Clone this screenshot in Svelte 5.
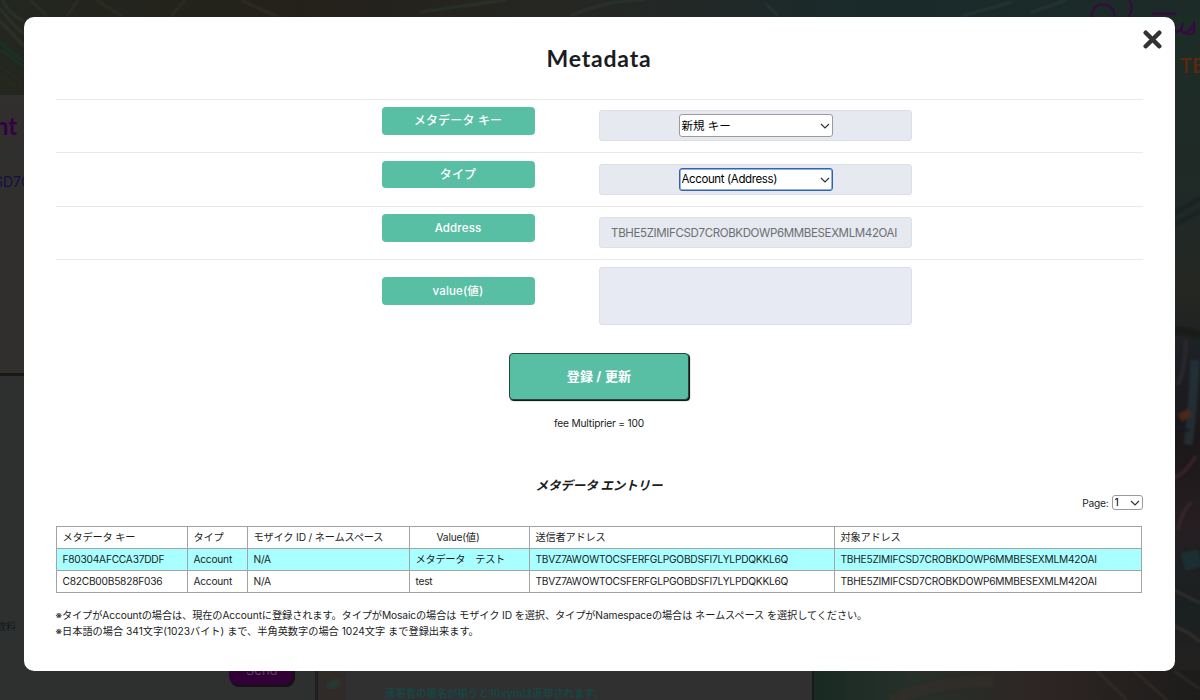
<script lang="ts">
  type Entry = {
    key: string;
    type: string;
    id: string;
    value: string;
    source: string;
    target: string;
  };

  const address = 'TBHE5ZIMIFCSD7CROBKDOWP6MMBESEXMLM42OAI';
  const sender = 'TBVZ7AWOWTOCSFERFGLPGOBDSFI7LYLPDQKKL6Q';

  const entries: Entry[] = [
    { key: 'F80304AFCCA37DDF', type: 'Account', id: 'N/A', value: 'メタデータ　テスト', source: sender, target: address },
    { key: 'C82CB00B5828F036', type: 'Account', id: 'N/A', value: 'test', source: sender, target: address },
  ];

  let open = true;
  let selected = 0;
  let metaKey = 'new';
  let metaType = 'account';
  let page = '1';
  let value = '';
</script>

<div class="screen">
  <svg class="backdrop" viewBox="0 0 1200 700" aria-hidden="true">
    <defs>
      <linearGradient id="top" x1="0" x2="1" y1="0" y2="0">
        <stop offset="0" stop-color="#23271f" />
        <stop offset="0.25" stop-color="#24211a" />
        <stop offset="0.5" stop-color="#262724" />
        <stop offset="0.72" stop-color="#1a2a2b" />
        <stop offset="1" stop-color="#1c2b27" />
      </linearGradient>
      <linearGradient id="right" x1="0" x2="0" y1="0" y2="1">
        <stop offset="0" stop-color="#1c2d26" />
        <stop offset="0.28" stop-color="#202927" />
        <stop offset="0.4" stop-color="#252722" />
        <stop offset="0.5" stop-color="#1c2024" />
        <stop offset="0.62" stop-color="#1c1719" />
        <stop offset="0.75" stop-color="#251f22" />
        <stop offset="0.86" stop-color="#1a2021" />
        <stop offset="1" stop-color="#26211e" />
      </linearGradient>
      <linearGradient id="bottom" x1="0" x2="1" y1="0" y2="0">
        <stop offset="0" stop-color="#182a23" />
        <stop offset="0.25" stop-color="#27302a" />
        <stop offset="0.6" stop-color="#2d2523" />
        <stop offset="1" stop-color="#1d1c1b" />
      </linearGradient>
      <filter id="paint" x="-5%" y="-5%" width="110%" height="110%">
        <feGaussianBlur stdDeviation="1.2" />
      </filter>
    </defs>
    <rect width="1200" height="700" fill="#303030" />
    <rect width="1200" height="95" fill="url(#top)" />
    <rect x="1100" y="17" width="100" height="683" fill="url(#right)" />
    <g fill="none" stroke-width="2" opacity="0.6" filter="url(#paint)">
      <path d="M0 8Q12 25 24 34M0 21l24 25M2 0q10 17 22 21" stroke="#3c4237" />
      <path d="M0 42l24 20M0 49l24 18" stroke="#174139" />
      <path d="M0 66l24 18M0 77l24 13" stroke="#302c22" />
      <path d="M30 0l17 16M67 16L78 0M96 0l26 16M171 16L185 0M241 0q14 7 36 16" stroke="#3c382b" />
      <path d="M420 12l86-12M570 16q36-16 74-16M766 4l12 12M962 16l50-14M1030 13l36-13" stroke="#33423d" />
      <path d="M1174 214l26-16M1174 225l26-14" stroke="#121d20" stroke-width="3" />
      <path d="M1174 330q14 0 26 6" stroke="#15160f" stroke-width="7" />
      <path d="M1178 385q8-20 8-45" stroke="#352f35" stroke-width="4" />
      <path d="M1195 360q-2 50-7 85" stroke="#283a42" stroke-width="9" />
      <path d="M1180 418l10-6" stroke="#6a321f" stroke-width="8" />
      <path d="M1175 425l14 6" stroke="#121a2b" stroke-width="4" />
      <path d="M1174 478q12-5 22-22M1178 530q4-20 14-28" stroke="#422a33" stroke-width="4" />
      <path d="M1183 562l17-4" stroke="#173a3d" stroke-width="18" />
      <path d="M1174 590l26 13M1174 626q14 5 26 16" stroke="#403a31" stroke-width="3" />
    </g>
    <rect y="97" width="317" height="603" fill="#302f2e" />
    <path d="M0 155.500h24M0 441.500h24" stroke="#20323a" />
    <path d="M0 374.500h24" stroke="#1b1712" stroke-width="3" />
    <rect x="0" y="376" width="317" height="324" fill="#2e3030" />
    <rect x="315" y="670" width="3" height="30" fill="#1c211f" />
    <rect x="318" y="670" width="28" height="30" fill="#302b29" />
    <path d="M327 688l13-8" fill="none" stroke="#224038" stroke-width="9" opacity="0.6" filter="url(#paint)" />
    <rect x="347" y="670" width="465" height="30" fill="#303030" />
    <rect x="812" y="670" width="2" height="30" fill="#171a18" />
    <rect x="814" y="670" width="386" height="30" fill="url(#bottom)" />
    <g fill="none" stroke-width="2" opacity="0.6" filter="url(#paint)">
      <path d="M890 700q62-22 103-18" stroke="#352d2a" stroke-width="12" />
      <path d="M1096 670l31 30M1133 670l34 30M1174 671l26 18" stroke="#403930" />
    </g>
    <rect x="230" y="655" width="65" height="32" rx="9" fill="#131113" />
    <rect x="229" y="653" width="64" height="32" rx="9" fill="#300036" />
    <text class="send" x="246" y="675" fill="#56435a">Send</text>
    <text class="heading" x="-5" y="135" fill="#350044">nt</text>
    <text class="code" x="-6" y="187" fill="#130f48">SD7C</text>
    <text class="small" x="-4" y="630" fill="#14191b">数料</text>
    <text class="notice" x="385" y="697" fill="#174545">連署者の署名が揃うと10xymは返却されます。</text>
    <text class="net" x="1180" y="73" fill="#58290f">TE</text>
    <g fill="none" stroke="#370944" stroke-width="2" stroke-linecap="round">
      <path d="M1092 17c-1-17 22-17 23 0M1129 0q6 8-1 17M1153 13.500h22" />
      <path d="M1175 25q-2 8 2 7q4-1 6-9q-3 10 1 10q6-1 10-10q2 9-2 11q-6 1-7-2M1189 30q4 0 6-2" />
    </g>
  </svg>

  {#if open}
    <section class="modal" aria-label="Metadata">
      <button class="close" aria-label="Close" on:click={() => (open = false)}>
        <svg viewBox="0 0 18 18"><path d="M2.600 2.600l12.800 12.800M15.400 2.600L2.600 15.400" /></svg>
      </button>
      <h1>Metadata</h1>

      <div class="form">
        <div class="row">
          <span class="label kana">メタデータ キー</span>
          <div class="field">
            <div class="select">
              <select bind:value={metaKey} aria-label="メタデータ キー">
                <option value="new">新規 キー</option>
              </select>
              <svg class="chevron" viewBox="0 0 10 6"><path d="M1 1l4 4 4-4" /></svg>
            </div>
          </div>
        </div>
        <div class="row">
          <span class="label kana">タイプ</span>
          <div class="field">
            <div class="select focused">
              <select bind:value={metaType} aria-label="タイプ">
                <option value="account">Account (Address)</option>
                <option value="mosaic">Mosaic</option>
                <option value="namespace">Namespace</option>
              </select>
              <svg class="chevron" viewBox="0 0 10 6"><path d="M1 1l4 4 4-4" /></svg>
            </div>
          </div>
        </div>
        <div class="row">
          <span class="label">Address</span>
          <div class="field address">{address}</div>
        </div>
        <div class="row tall">
          <span class="label">value(値)</span>
          <textarea class="field area" bind:value aria-label="value"></textarea>
        </div>
      </div>

      <button class="submit">登録 / 更新</button>
      <p class="fee">fee Multiprier = 100</p>

      <h2>メタデータ エントリー</h2>
      <div class="pager">
        <span>Page:</span>
        <div class="select page">
          <select bind:value={page} aria-label="Page">
            <option value="1">1</option>
          </select>
          <svg class="chevron" viewBox="0 0 10 6"><path d="M1 1l4 4 4-4" /></svg>
        </div>
      </div>

      <table>
        <colgroup>
          <col class="c-key" /><col class="c-type" /><col class="c-id" />
          <col class="c-value" /><col class="c-source" /><col />
        </colgroup>
        <thead>
          <tr>
            <th>メタデータ キー</th>
            <th>タイプ</th>
            <th>モザイク ID / ネームスペース</th>
            <th class="h-value">Value(値)</th>
            <th>送信者アドレス</th>
            <th>対象アドレス</th>
          </tr>
        </thead>
        <tbody>
          {#each entries as entry, i}
            <tr class:selected={selected === i} on:click={() => (selected = i)}>
              <td>{entry.key}</td>
              <td>{entry.type}</td>
              <td>{entry.id}</td>
              <td>{entry.value}</td>
              <td>{entry.source}</td>
              <td>{entry.target}</td>
            </tr>
          {/each}
        </tbody>
      </table>

      <div class="notes">
        <p class="note-type">※タイプがAccountの場合は、現在のAccountに登録されます。タイプがMosaicの場合は モザイク ID を選択、タイプがNamespaceの場合は ネームスペース を選択してください。</p>
        <p>※日本語の場合 341文字(1023バイト) まで、半角英数字の場合 1024文字 まで登録出来ます。</p>
      </div>
    </section>
  {/if}
</div>

<style>
  :global(body) {
    margin: 0;
    overflow: hidden;
  }

  .screen {
    position: relative;
    box-sizing: border-box;
    width: 1200px;
    height: 700px;
    padding: 16.5px 25.5px 29.5px 23.5px;
    overflow: hidden;
    font-family: Inter, "Noto Sans CJK JP", sans-serif;
    color: #1b1c1e;
  }

  .screen * {
    box-sizing: border-box;
  }

  .backdrop {
    position: absolute;
    inset: 0;
    width: 1200px;
    height: 700px;
  }

  .send { font-size: 13px; }
  .heading { font: 700 24px Lato, sans-serif; }
  .code { font-size: 14px; }
  .small { font-size: 10px; }
  .notice { font-size: 10.400px; font-weight: 700; }
  .net { font: 700 20px Lato, sans-serif; }

  .modal {
    position: relative;
    height: 654px;
    padding: 0 32px;
    background: #fff;
    border-radius: 10px;
  }

  .close {
    position: absolute;
    top: 13px;
    right: 13px;
    width: 19px;
    height: 19px;
    padding: 0;
    border: 0;
    background: none;
    cursor: pointer;
  }

  .close svg {
    display: block;
    width: 19px;
    height: 19px;
  }

  .close path {
    stroke: #333;
    stroke-width: 4.300;
    stroke-linecap: round;
  }

  h1 {
    height: 82px;
    margin: 0;
    padding-top: 25.5px;
    font: 700 23px/32px Lato, sans-serif;
    letter-spacing: 0.8px;
    text-align: center;
  }

  .row {
    display: grid;
    grid-template-columns: 153px 313px;
    column-gap: 64px;
    align-items: start;
    height: 53.5px;
    padding: 7.5px 0 0 326px;
    border-top: 1px solid #e9e9e9;
  }

  .row.tall {
    height: 83px;
    padding-top: 6.5px;
  }

  .label {
    height: 27.5px;
    border-radius: 4px;
    background: #58bfa5;
    color: #fff;
    font-size: 11.500px;
    font-weight: 500;
    line-height: 28px;
    letter-spacing: 0.15px;
    text-align: center;
  }

  .tall .label {
    margin-top: 10.5px;
    line-height: 29px;
  }

  .label.kana {
    font-size: 12px;
    line-height: 28px;
  }

  .field {
    display: flex;
    justify-content: center;
    align-items: center;
    width: 313px;
    height: 31px;
    margin-top: 3px;
    border: 1px solid #dcdfe5;
    border-radius: 3px;
    background: #e6eaf0;
  }

  .address {
    padding: 1px 2px 0 0;
    color: #6c6e71;
    font-size: 11.500px;
    line-height: 20px;
    letter-spacing: -0.36px;
  }

  .area {
    display: block;
    height: 58px;
    margin: 0;
    background: #e7eaf2;
    outline: 0;
    resize: none;
  }

  .select {
    position: relative;
    width: 154px;
    height: 23px;
    margin-left: 1px;
    border: 1px solid #9a9a9f;
    border-radius: 3px;
    background: #fff;
  }

  .select.focused {
    border-color: #2d62b4;
    box-shadow: inset 0 0 0 0.5px #2d62b4;
    letter-spacing: -0.38px;
  }

  .select select {
    display: block;
    width: 100%;
    height: 100%;
    padding: 0 0 0 2px;
    border: 0;
    outline: 0;
    appearance: none;
    background: none;
    color: #000;
    font: 11.500px Inter, "Noto Sans CJK JP", sans-serif;
    letter-spacing: inherit;
  }

  .chevron {
    position: absolute;
    top: 8px;
    right: 2px;
    width: 10px;
    height: 6px;
    pointer-events: none;
  }

  .chevron path {
    fill: none;
    stroke: #333;
    stroke-width: 1.200;
  }

  .submit {
    display: block;
    width: 180px;
    height: 47px;
    margin: 11px auto 0 453.500px;
    padding: 0 0 2px;
    border: 1px solid #26463e;
    border-radius: 4px;
    background: #58bfa5;
    box-shadow: 1px 1px 1px #000;
    color: #fff;
    font: 700 13px Inter, "Noto Sans CJK JP", sans-serif;
    letter-spacing: 0.2px;
  }

  .fee {
    margin: 14.5px 0 0;
    font-size: 10.200px;
    line-height: 16px;
    letter-spacing: -0.2px;
    text-align: center;
  }

  h2 {
    margin: 46.5px 0 0;
    font-size: 12.500px;
    font-style: italic;
    font-weight: 700;
    line-height: 18px;
    letter-spacing: -0.1px;
    text-align: center;
  }

  .pager {
    display: flex;
    justify-content: flex-end;
    align-items: center;
    gap: 3px;
    height: 15px;
    font-size: 10.200px;
    letter-spacing: -0.2px;
  }

  .select.page {
    width: 31px;
    height: 15px;
    margin-left: 0;
  }

  .page select {
    font-size: 10.500px;
  }

  .page .chevron {
    top: 4px;
  }

  table {
    width: 1086px;
    margin-top: 16px;
    border-collapse: collapse;
    table-layout: fixed;
    font-size: 10.200px;
    letter-spacing: -0.24px;
  }

  .c-key { width: 131px; }
  .c-type { width: 60px; }
  .c-id { width: 162px; }
  .c-value { width: 120px; }
  .c-source { width: 305px; }

  th,
  td {
    height: 22px;
    padding: 0 6px;
    border: 1px solid #a3a3a3;
    font-weight: 400;
    line-height: 15px;
    text-align: left;
    white-space: nowrap;
  }

  th {
    letter-spacing: -0.17px;
  }

  .h-value {
    padding-left: 27px;
  }

  .selected {
    background: #a9ffff;
  }

  .notes {
    margin-top: 15px;
    font-size: 10.200px;
    white-space: nowrap;
  }

  .notes p {
    margin: 0;
    line-height: 15.500px;
  }

  .note-type {
    letter-spacing: -0.1px;
  }
</style>
